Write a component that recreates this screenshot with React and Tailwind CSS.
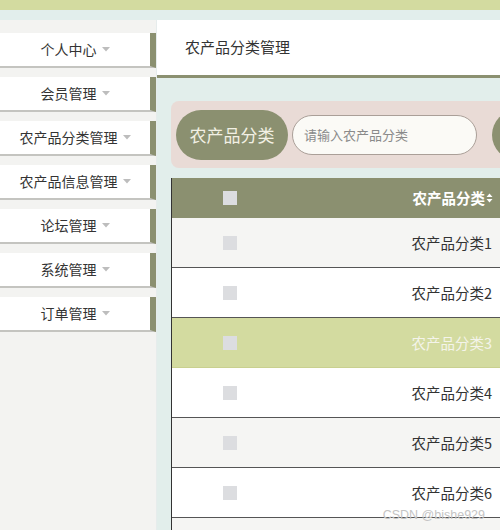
const menus = ["个人中心", "会员管理", "农产品分类管理", "农产品信息管理", "论坛管理", "系统管理", "订单管理"];

const rows = [
  { name: "农产品分类1", bg: "bg-[#f5f5f3]" },
  { name: "农产品分类2", bg: "bg-white" },
  { name: "农产品分类3", bg: "bg-[#d3dba0]", active: true },
  { name: "农产品分类4", bg: "bg-white" },
  { name: "农产品分类5", bg: "bg-[#f5f5f3]" },
  { name: "农产品分类6", bg: "bg-white" },
];

function Caret() {
  return (
    <svg width="8" height="5" viewBox="0 0 8 5" className="ml-[5px]">
      <path d="M0 0H8L4 4.5Z" fill="#bdbdbd" />
    </svg>
  );
}

export default function App() {
  return (
    <div
      className="relative w-[500px] h-[530px] overflow-hidden flex flex-col bg-[#e2eeeb]"
      style={{ fontFamily: '"Noto Sans CJK SC", "Noto Sans", sans-serif' }}
    >
      <div className="h-[10px] bg-[#d3dba0] shrink-0" />
      <div className="h-[10px] bg-[#e2eeec] shrink-0" />
      <div className="flex flex-1 min-h-0">
        {/* sidebar */}
        <div className="w-[157px] shrink-0 bg-[#f3f3f1] pt-[13px] flex flex-col gap-[9px] border-r border-[#e6ecec]">
          {menus.map((m) => (
            <div
              key={m}
              className="h-[35px] w-[156px] bg-white border-r-[6px] border-r-[#8b9070] border-b-2 border-b-[#c4c4c0] flex items-center justify-center text-[14px] text-[#333]"
            >
              {m}
              <Caret />
            </div>
          ))}
        </div>

        {/* main */}
        <div className="flex-1 min-w-0 flex flex-col">
          <div className="h-[58px] bg-white border-b-[3px] border-[#8b9070] flex items-center pl-[28px] text-[15px] text-[#333] shrink-0">
            农产品分类管理
          </div>
          <div className="pl-[14px] pt-[23px]">
            <div className="h-[67px] bg-[#e9dbd6] rounded-l-[8px] flex items-center pl-[5px] gap-[4px]">
              <div className="h-[50px] w-[112px] shrink-0 rounded-full bg-[#8b9070] text-[#f2f0e4] text-[17px] flex items-center justify-center">
                农产品分类
              </div>
              <div className="h-[40px] w-[185px] shrink-0 rounded-full border-[1.5px] border-[#aa9f98] bg-[#fbfaf6] flex items-center pl-[11px] text-[13px] text-[#8a8a8a]">
                请输入农产品分类
              </div>
              <div className="h-[50px] w-[60px] shrink-0 ml-[11px] rounded-full bg-[#8b9070]" />
            </div>

            <div className="mt-[10px] border-l border-[#333]">
              <div className="h-[40px] bg-[#8b9070] flex items-center">
                <div className="w-[116px] flex justify-center">
                  <span className="w-[14px] h-[14px] bg-[#dcdde0]" />
                </div>
                <div className="flex-1 flex justify-end items-center pr-[7px] text-[14.5px] font-bold text-white">
                  农产品分类
                  <svg width="7" height="10" viewBox="0 0 7 10" className="ml-[1px]">
                    <path d="M3.5 0.5L6.5 4H0.5Z M3.5 9.5L6.5 6H0.5Z" fill="#fff" />
                  </svg>
                </div>
              </div>
              {rows.map((r) => (
                <div
                  key={r.name}
                  className={`h-[50px] ${r.bg} flex items-center border-b-[1.5px] ${
                    r.active ? "border-[#c9d08f]" : "border-[#555]"
                  }`}
                >
                  <div className="w-[116px] flex justify-center">
                    <span className="w-[14px] h-[14px] bg-[#dcdde0]" />
                  </div>
                  <div
                    className={`flex-1 text-right pr-[8px] text-[14.5px] ${
                      r.active ? "text-[#f4f4ea]" : "text-[#333]"
                    }`}
                  >
                    {r.name}
                  </div>
                </div>
              ))}
              {/* next row, only its top shows */}
              <div className="h-[50px] bg-[#f5f5f3]" />
            </div>
          </div>
        </div>
      </div>
      <div
        className="absolute right-[15px] bottom-[9px] text-[12.5px] text-[#c4c4c4] leading-none"
        style={{ fontFamily: '"Liberation Sans", sans-serif' }}
      >
        CSDN @bishe929
      </div>
    </div>
  );
}
